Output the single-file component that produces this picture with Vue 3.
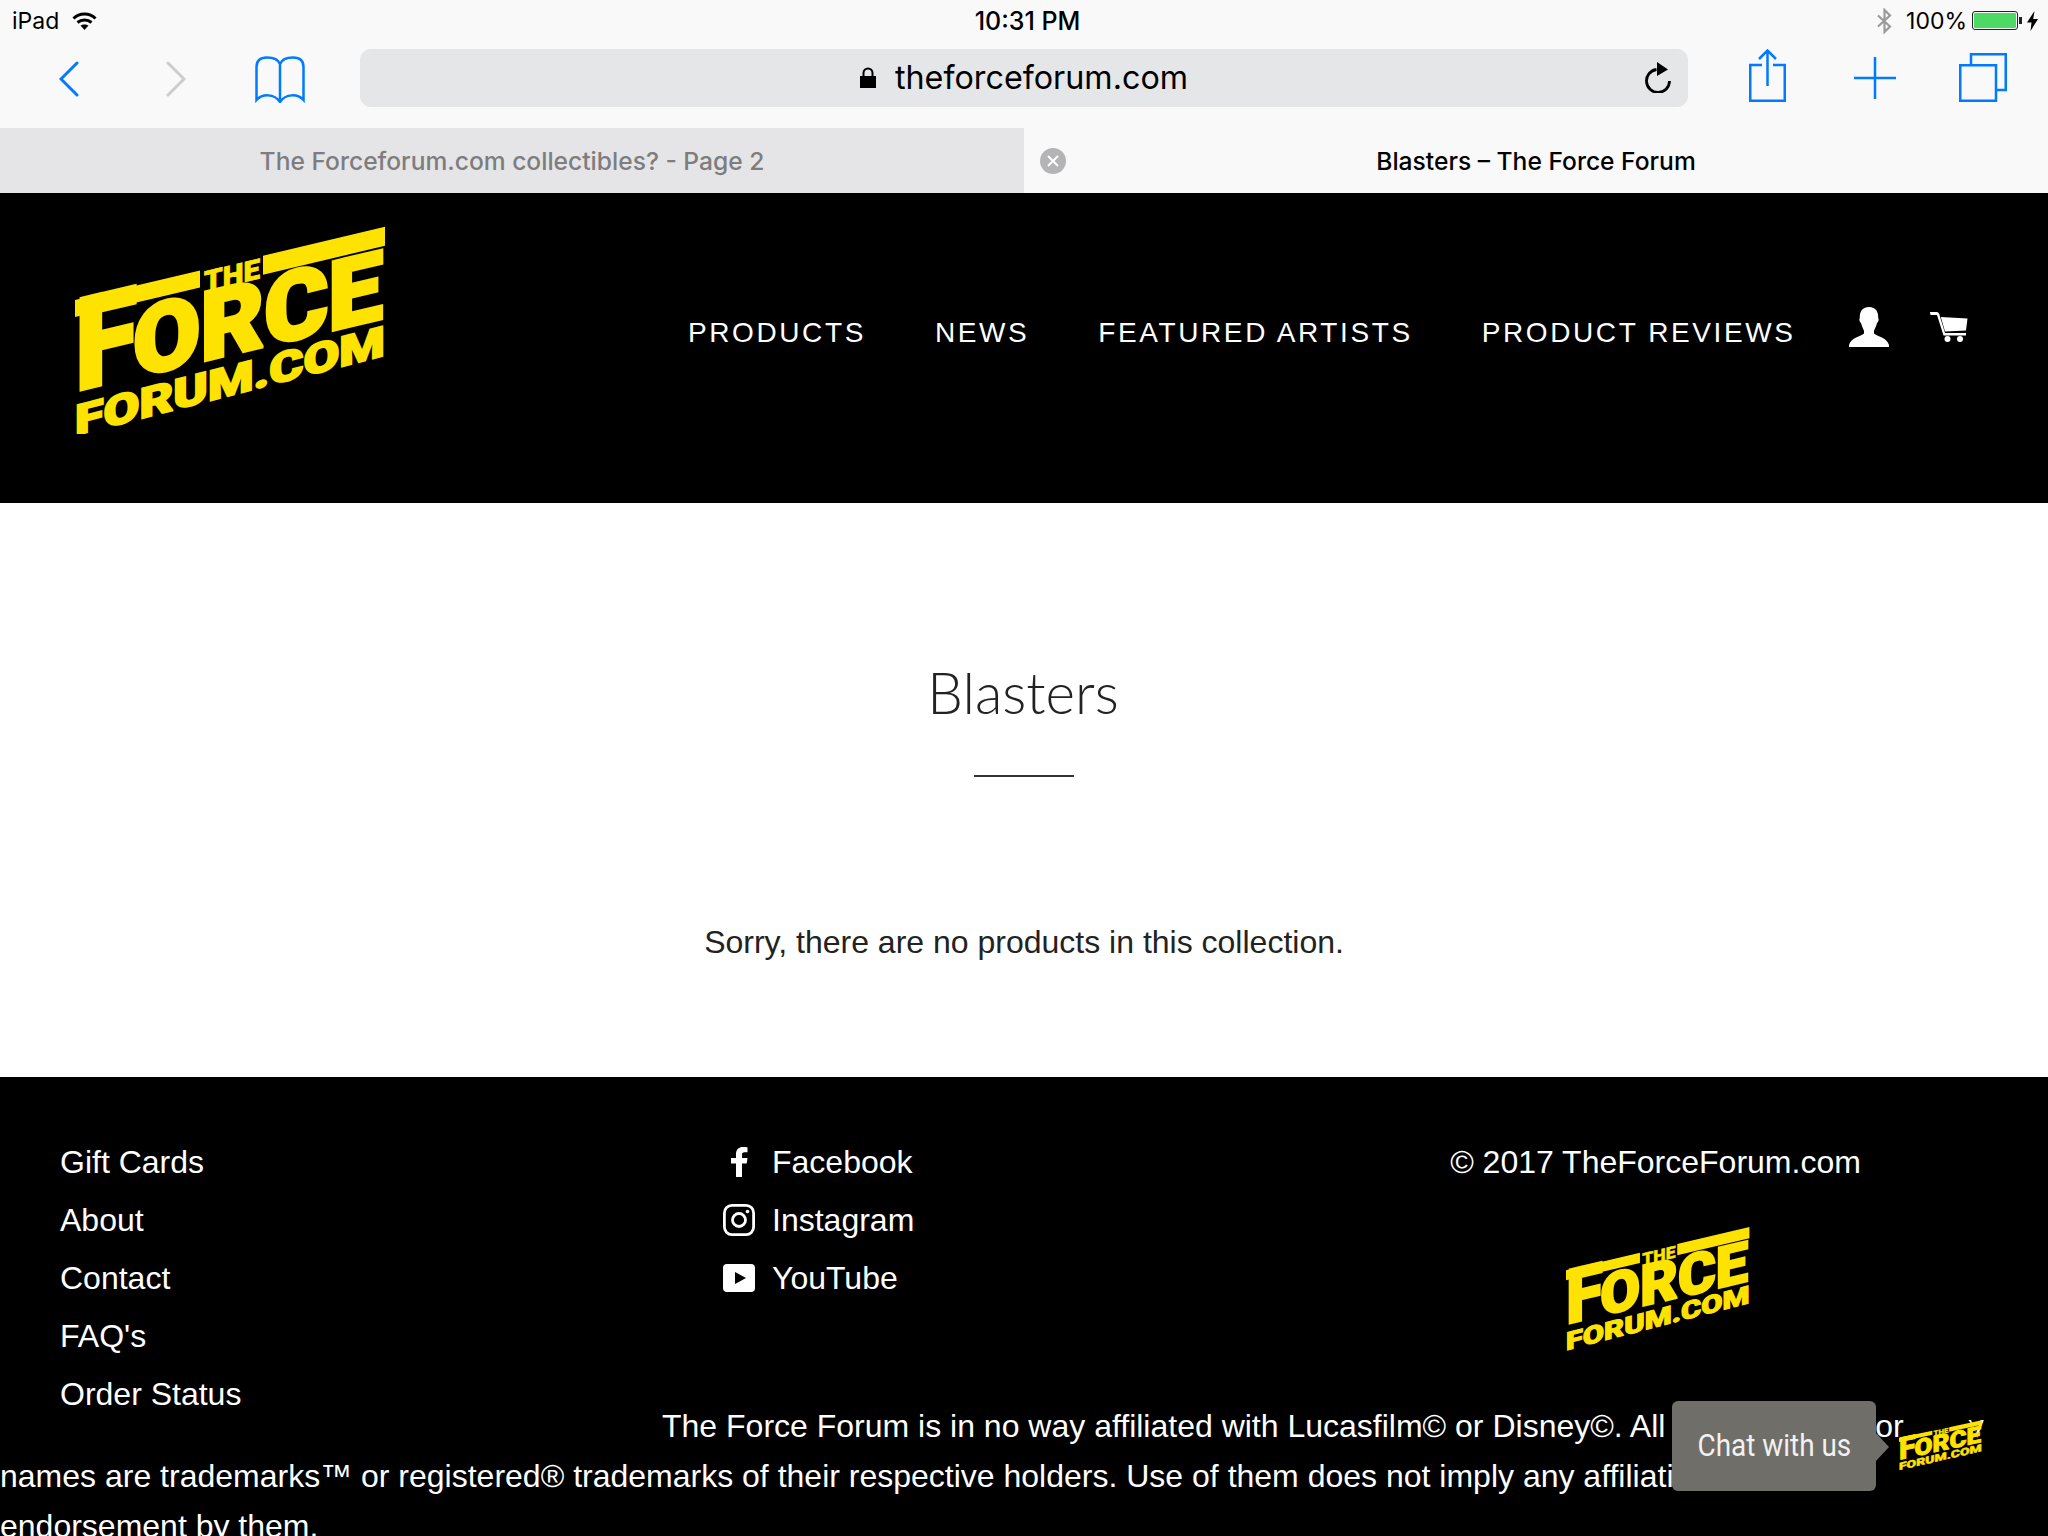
<template>
  <div class="page">
    <!-- logo is shared by header, footer and chat button -->
    <svg class="defs" width="0" height="0">
      <symbol id="ff-logo" viewBox="25 16 311 208">
        <g transform="skewY(-13.3)" fill="#ffe300" stroke="#ffe300">
          <polygon points="25,96 150,96 150,113 25,113" stroke="none" />
          <polygon points="213,96 335,96 335,115 213,115" stroke="none" />
          <text class="logo-text" y="118" font-size="28" stroke-width=".8">
            <tspan x="154" textLength="56" lengthAdjust="spacingAndGlyphs">THE</tspan>
          </text>
          <text class="logo-text" y="187" font-size="96" stroke-width="3.500">
            <tspan x="25" font-size="128" textLength="62" lengthAdjust="spacingAndGlyphs">F</tspan><tspan x="83" textLength="250" lengthAdjust="spacingAndGlyphs">ORCE</tspan>
          </text>
        </g>
        <g transform="skewY(-14.5)" fill="#ffe300" stroke="#ffe300">
          <text class="logo-text" y="232" font-size="42" stroke-width="1.800">
            <tspan x="25" textLength="310" lengthAdjust="spacingAndGlyphs">FORUM.COM</tspan>
          </text>
        </g>
      </symbol>
    </svg>

    <div class="browser">
      <div class="status">
        <div class="status-left">
          <span>iPad</span>
          <svg class="wifi" viewBox="0 0 25 18" fill="none" stroke="#000" stroke-width="3">
            <path d="M1.5 6.5C7.5 .6 17.500 .6 23.500 6.500" />
            <path d="M5.500 10.500C9.500 7 15.500 7 19.500 10.500" />
            <path d="M12.500 18L8.500 13.500C10.500 12 14.500 12 16.500 13.500Z" fill="#000" stroke="none" />
          </svg>
        </div>
        <div class="status-time">10:31 PM</div>
        <div class="status-right">
          <svg class="bt" viewBox="0 0 17 26" fill="none" stroke="#9a9a9a" stroke-width="2.200">
            <path d="M2 7.500L14 18.500L8.500 24V2L14 7.500L2 18.500" />
          </svg>
          <span class="pct">100%</span>
          <span class="battery"><span class="battery-fill"></span></span>
          <svg class="bolt" viewBox="0 0 11 20"><path d="M7.500 0L0 11.500H4.500L3.500 20L11 8H6.200Z" /></svg>
        </div>
      </div>

      <div class="toolbar">
        <svg class="tb back" viewBox="0 0 20 36" fill="none" stroke="#007aff" stroke-width="3" stroke-linecap="round">
          <path d="M18 2L2 18L18 34" />
        </svg>
        <svg class="tb forward" viewBox="0 0 20 36" fill="none" stroke="#cdcdcf" stroke-width="3" stroke-linecap="round">
          <path d="M2 2L18 18L2 34" />
        </svg>
        <svg class="tb book" viewBox="0 0 50 47" fill="none" stroke="#007aff" stroke-width="2.500">
          <path d="M25 8C23 3 18 1.500 12 1.500C5 1.500 1.500 5 1.500 11V44C7 38 19 37 25 46C31 37 43 38 48.500 44V11C48.500 5 45 1.500 38 1.500C32 1.500 27 3 25 8V46" />
        </svg>
        <div class="url">
          <svg class="lock" viewBox="0 0 16 21">
            <path d="M0 9H16V21H0Z" />
            <path d="M3.500 10V6A4.500 4.500 0 0 1 12.500 6V10" fill="none" stroke="#000" stroke-width="2" />
          </svg>
          <span>theforceforum.com</span>
          <svg class="reload" viewBox="0 0 28 31" fill="none" stroke="#000" stroke-width="2.800">
            <path d="M12.500 7.500A11.500 11.500 0 1 0 25.500 19" />
            <path d="M13 0L24 7.500L13 14Z" fill="#000" stroke="none" />
          </svg>
        </div>
        <svg class="tb share" viewBox="0 0 37 53" fill="none" stroke="#007aff" stroke-width="2.500">
          <path d="M13 16H1.250V51.750H35.750V16H24" />
          <path d="M18.500 2V37M10 10L18.500 1.500L27 10" />
        </svg>
        <svg class="tb plus" viewBox="0 0 42 42" fill="none" stroke="#007aff" stroke-width="2.500">
          <path d="M21 0V42M0 21H42" />
        </svg>
        <svg class="tb tabs-icon" viewBox="0 0 48 49" fill="none" stroke="#007aff" stroke-width="2.500">
          <path d="M1.250 12.250H37V47.750H1.250Z" />
          <path d="M12 11V1.250H46.750V37H38" />
        </svg>
      </div>

      <div class="tabbar">
        <div class="tab tab-off">The Forceforum.com collectibles? - Page 2</div>
        <div class="tab tab-on">
          <span class="tab-close">
            <svg viewBox="0 0 12 12" stroke="#fff" stroke-width="2"><path d="M1 1L11 11M11 1L1 11" /></svg>
          </span>
          Blasters – The Force Forum
        </div>
      </div>
    </div>

    <header class="site-header">
      <svg class="logo"><use href="#ff-logo" /></svg>
      <nav class="nav">
        <a v-for="item in navItems" :key="item">{{ item }}</a>
      </nav>
      <svg class="person" viewBox="0 0 40 40" fill="#fff">
        <path d="M20 0C13 0 10.500 5 10.800 11C9.800 12 10.500 15 12 16C13 20 14.500 22 15 24V26.500C12 29.500 2 30.500 0 38V40H40V38C38 30.500 28 29.500 25 26.500V24C25.500 22 27 20 28 16C29.500 15 30.200 12 29.200 11C29.500 5 27 0 20 0Z" />
      </svg>
      <svg class="cart" viewBox="0 0 38 30" fill="#fff">
        <path d="M0 0H6.500C8 0 8.700 .7 9.200 2L15 21H36V23.500H13.500L7 3H1C.4 3 0 1.500 0 0Z" />
        <path d="M10.800 5L37.500 6.500L36 18.500L15 19.500Z" />
        <circle cx="17.500" cy="27" r="3" />
        <circle cx="30" cy="27" r="3" />
      </svg>
    </header>

    <main class="content">
      <h1 class="title">Blasters</h1>
      <div class="rule"></div>
      <p class="empty">Sorry, there are no products in this collection.</p>
    </main>

    <footer class="site-footer">
      <!-- the float pushes the first disclaimer line to the right -->
      <ul class="links">
        <li v-for="link in footerLinks" :key="link">{{ link }}</li>
      </ul>
      <div class="footer-cols">
        <ul class="social">
          <li>
            <span class="social-icon">
              <svg class="fb" viewBox="0 0 17 30" fill="#fff">
                <path d="M5 30V16.500H0V11H5V7C5 2.500 8 0 12 0C14 0 15.500 .2 16.500 .3V5.200H13.500C11.500 5.200 11 6.200 11 7.800V11H16.500L15.700 16.500H11V30Z" />
              </svg>
            </span>
            Facebook
          </li>
          <li>
            <span class="social-icon">
              <svg class="ig" viewBox="0 0 32 32" fill="none" stroke="#fff" stroke-width="2.800">
                <rect x="1.400" y="1.400" width="29.200" height="29.200" rx="7.500" />
                <circle cx="16" cy="16" r="6.500" />
                <circle cx="24.500" cy="7.500" r="1.800" fill="#fff" stroke="none" />
              </svg>
            </span>
            Instagram
          </li>
          <li>
            <span class="social-icon">
              <svg class="yt" viewBox="0 0 32 28">
                <rect width="32" height="28" rx="4" fill="#fff" />
                <path d="M12 8L23 14L12 20Z" fill="#000" />
              </svg>
            </span>
            YouTube
          </li>
        </ul>
        <div class="brand">
          <div>© 2017 TheForceForum.com</div>
          <svg class="logo-small"><use href="#ff-logo" /></svg>
        </div>
      </div>
      <p class="disclaimer">The Force Forum is in no way affiliated with Lucasfilm© or Disney©. All product logos or party names are trademarks™ or registered® trademarks of their respective holders. Use of them does not imply any affiliation with or endorsement by them.</p>
    </footer>

    <div class="chat">
      <div class="chat-bubble"><span class="chat-label">Chat with us</span></div>
      <div class="chat-avatar"></div>
      <svg class="logo-chat"><use href="#ff-logo" /></svg>
    </div>
  </div>
</template>

<script setup>
const navItems = ['PRODUCTS', 'NEWS', 'FEATURED ARTISTS', 'PRODUCT REVIEWS']
const footerLinks = ['Gift Cards', 'About', 'Contact', "FAQ's", 'Order Status']
</script>

<style>
html, body {
  margin: 0;
  background: #000;
}
</style>

<style scoped>
.page {
  position: relative;
  width: 2048px;
  height: 1536px;
  overflow: hidden;
  background: #fff;
  font-family: "Liberation Sans", Arial, sans-serif;
  color: #fff;
}

.defs {
  position: absolute;
}

.logo-text {
  font-family: Roboto, "Liberation Sans", sans-serif;
  font-weight: 900;
}

.browser {
  background: #f9f9f9;
  font-family: Inter, "Liberation Sans", sans-serif;
  color: #000;
}

.status {
  height: 41px;
  display: grid;
  grid-template-columns: 1fr auto 1fr;
  align-items: center;
  font-size: 23px;
  padding: 0 10px 0 12px;
}

.status-left {
  display: flex;
  align-items: center;
  gap: 13px;
}

.wifi {
  width: 25px;
  height: 18px;
}

.status-time {
  margin-left: 5px;
  font-size: 25px;
  font-weight: 500;
}

.status-right {
  display: flex;
  justify-content: flex-end;
  align-items: center;
}

.bt {
  width: 17px;
  height: 26px;
  margin-right: 13px;
}

.pct {
  margin-right: 5px;
}

.battery {
  position: relative;
  width: 46px;
  height: 19px;
  border: 1px solid #222;
  border-radius: 3px;
  padding: 1px;
  box-sizing: border-box;
  margin-right: 9px;
}

.battery::after {
  content: "";
  position: absolute;
  right: -5px;
  top: 5px;
  width: 3px;
  height: 7px;
  background: #222;
}

.battery-fill {
  display: block;
  height: 100%;
  background: #4cd964;
  border-radius: 1px;
}

.bolt {
  width: 11px;
  height: 20px;
}

.toolbar {
  height: 87px;
  display: flex;
  align-items: flex-start;
}

.tb {
  flex: none;
}

.back {
  width: 20px;
  height: 36px;
  margin: 20px 0 0 59px;
}

.forward {
  width: 20px;
  height: 36px;
  margin: 20px 0 0 87px;
}

.book {
  width: 50px;
  height: 47px;
  margin: 15px 0 0 69px;
}

.url {
  position: relative;
  flex: none;
  width: 1328px;
  height: 58px;
  margin: 8px 0 0 55px;
  padding-bottom: 2px;
  box-sizing: border-box;
  background: #e5e6e8;
  border-radius: 11px;
  display: flex;
  align-items: center;
  justify-content: center;
  gap: 19px;
  font-size: 32.300px;
}

.lock {
  width: 16px;
  height: 21px;
}

.reload {
  position: absolute;
  right: 16px;
  top: 13px;
  width: 28px;
  height: 31px;
}

.share {
  width: 37px;
  height: 53px;
  margin: 8px 0 0 61px;
}

.plus {
  width: 42px;
  height: 42px;
  margin: 16px 0 0 68px;
}

.tabs-icon {
  width: 48px;
  height: 49px;
  margin: 12px 0 0 63px;
}

.tabbar {
  height: 65px;
  display: flex;
  font-size: 24.600px;
  font-weight: 500;
}

.tab {
  position: relative;
  flex: 1;
  display: flex;
  align-items: center;
  justify-content: center;
}

.tab-off {
  background: #e5e5e7;
  color: #7d7d80;
}

.tab-close {
  position: absolute;
  left: 16px;
  top: 20px;
  width: 26px;
  height: 26px;
  border-radius: 50%;
  background: #b4b4b6;
  display: flex;
  align-items: center;
  justify-content: center;
}

.tab-close svg {
  width: 12px;
  height: 12px;
}

.site-header {
  height: 310px;
  background: #000;
  display: flex;
  align-items: flex-start;
}

.logo {
  flex: none;
  width: 311px;
  height: 208px;
  margin: 33px 0 0 75px;
}

.nav {
  display: flex;
  gap: 69px;
  margin: 122px 0 0 302px;
  font-size: 28px;
  line-height: 36px;
  letter-spacing: 2.600px;
  white-space: nowrap;
}

.person {
  flex: none;
  width: 40px;
  height: 40px;
  margin: 114px 0 0 53px;
}

.cart {
  flex: none;
  width: 38px;
  height: 30px;
  margin: 119px 0 0 41px;
}

.content {
  height: 574px;
  background: #fff;
  color: #222;
  display: flex;
  flex-direction: column;
  align-items: center;
}

.title {
  margin: 151px 0 0 -2px;
  font-family: Lato, sans-serif;
  font-size: 56.500px;
  font-weight: 300;
  line-height: 76px;
}

.rule {
  width: 100px;
  height: 2px;
  margin-top: 45px;
  background: #333;
}

.empty {
  margin: 145px 0 0;
  font-size: 32px;
  line-height: 40px;
}

.site-footer {
  height: 459px;
  box-sizing: border-box;
  padding-top: 55.500px;
  background: #000;
  font-size: 32px;
}

.links,
.social {
  list-style: none;
  margin: 0;
  padding: 0;
  line-height: 58.200px;
}

.links {
  float: left;
  width: 662px;
  padding-left: 60px;
  box-sizing: border-box;
}

.footer-cols {
  display: flex;
  height: 268.500px;
  margin-left: 723px;
}

.social {
  width: 727px;
}

.social li {
  display: flex;
  align-items: center;
}

.social-icon {
  display: flex;
  justify-content: center;
  width: 32px;
  margin-right: 17px;
}

.fb {
  width: 17px;
  height: 30px;
}

.ig {
  width: 32px;
  height: 32px;
}

.yt {
  width: 32px;
  height: 28px;
}

.brand {
  width: 411px;
  line-height: 58px;
  text-align: center;
}

.logo-small {
  display: block;
  width: 184px;
  height: 126px;
  margin: 34px 0 0 116px;
}

.disclaimer {
  width: 1990px;
  margin: 0;
  line-height: 50px;
}

.chat {
  position: absolute;
  left: 1672px;
  top: 1401px;
}

.chat-bubble {
  position: relative;
  width: 204px;
  height: 90px;
  background: #6f6e68;
  border-radius: 6px;
  font-family: Roboto, sans-serif;
  font-size: 31px;
  line-height: 90px;
  text-align: center;
  color: #f2f2f0;
}

.chat-label {
  display: inline-block;
  transform: scaleX(.9);
}

.chat-bubble::after {
  content: "";
  position: absolute;
  left: 100%;
  top: 32px;
  border-left: 13px solid #6f6e68;
  border-top: 14px solid transparent;
  border-bottom: 14px solid transparent;
}

.chat-avatar {
  position: absolute;
  left: 230px;
  top: 6px;
  width: 76px;
  height: 76px;
  border-radius: 50%;
  background: #000;
}

.logo-chat {
  position: absolute;
  left: 227px;
  top: 16px;
  width: 83px;
  height: 56px;
  transform: scaleY(.9);
}
</style>
